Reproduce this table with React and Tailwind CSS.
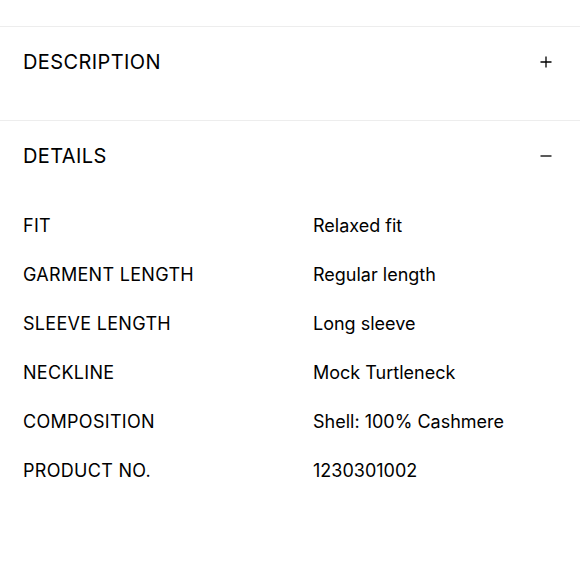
import React from "react";

const details = [
  ["FIT", "Relaxed fit"],
  ["GARMENT LENGTH", "Regular length"],
  ["SLEEVE LENGTH", "Long sleeve"],
  ["NECKLINE", "Mock Turtleneck"],
  ["COMPOSITION", "Shell: 100% Cashmere"],
  ["PRODUCT NO.", "1230301002"],
];

const Plus = () => (
  <svg width="12" height="12" viewBox="0 0 12 12">
    <path d="M6 0.5v11M0.5 6h11" stroke="currentColor" strokeWidth="1.3" />
  </svg>
);

const Minus = () => (
  <svg width="12" height="12" viewBox="0 0 12 12">
    <path d="M0.5 6h11" stroke="currentColor" strokeWidth="1.3" />
  </svg>
);

export default function App() {
  return (
    <div
      className="w-[580px] h-[580px] bg-white pt-[26px] text-black font-normal"
      style={{ fontFamily: "Inter, 'Liberation Sans', sans-serif" }}
    >
      <section className="border-t border-[#ededed] pb-[23px]">
        <div className="h-[70px] flex items-center justify-between pl-[23px] pr-[28px]">
          <h2 className="text-[20px] tracking-[0.4px]">DESCRIPTION</h2>
          <Plus />
        </div>
      </section>

      <section className="border-t border-[#ededed]">
        <div className="h-[69px] flex items-center justify-between pl-[23px] pr-[28px]">
          <h2 className="text-[20px] tracking-[0.4px]">DETAILS</h2>
          <Minus />
        </div>
        <div className="pt-[11px] pl-[23px]">
          {details.map(([label, value]) => (
            <div key={label} className="h-[49px] flex items-center text-[18px]">
              <span className="w-[290px] tracking-[0.3px]">{label}</span>
              <span>{value}</span>
            </div>
          ))}
        </div>
      </section>
    </div>
  );
}
